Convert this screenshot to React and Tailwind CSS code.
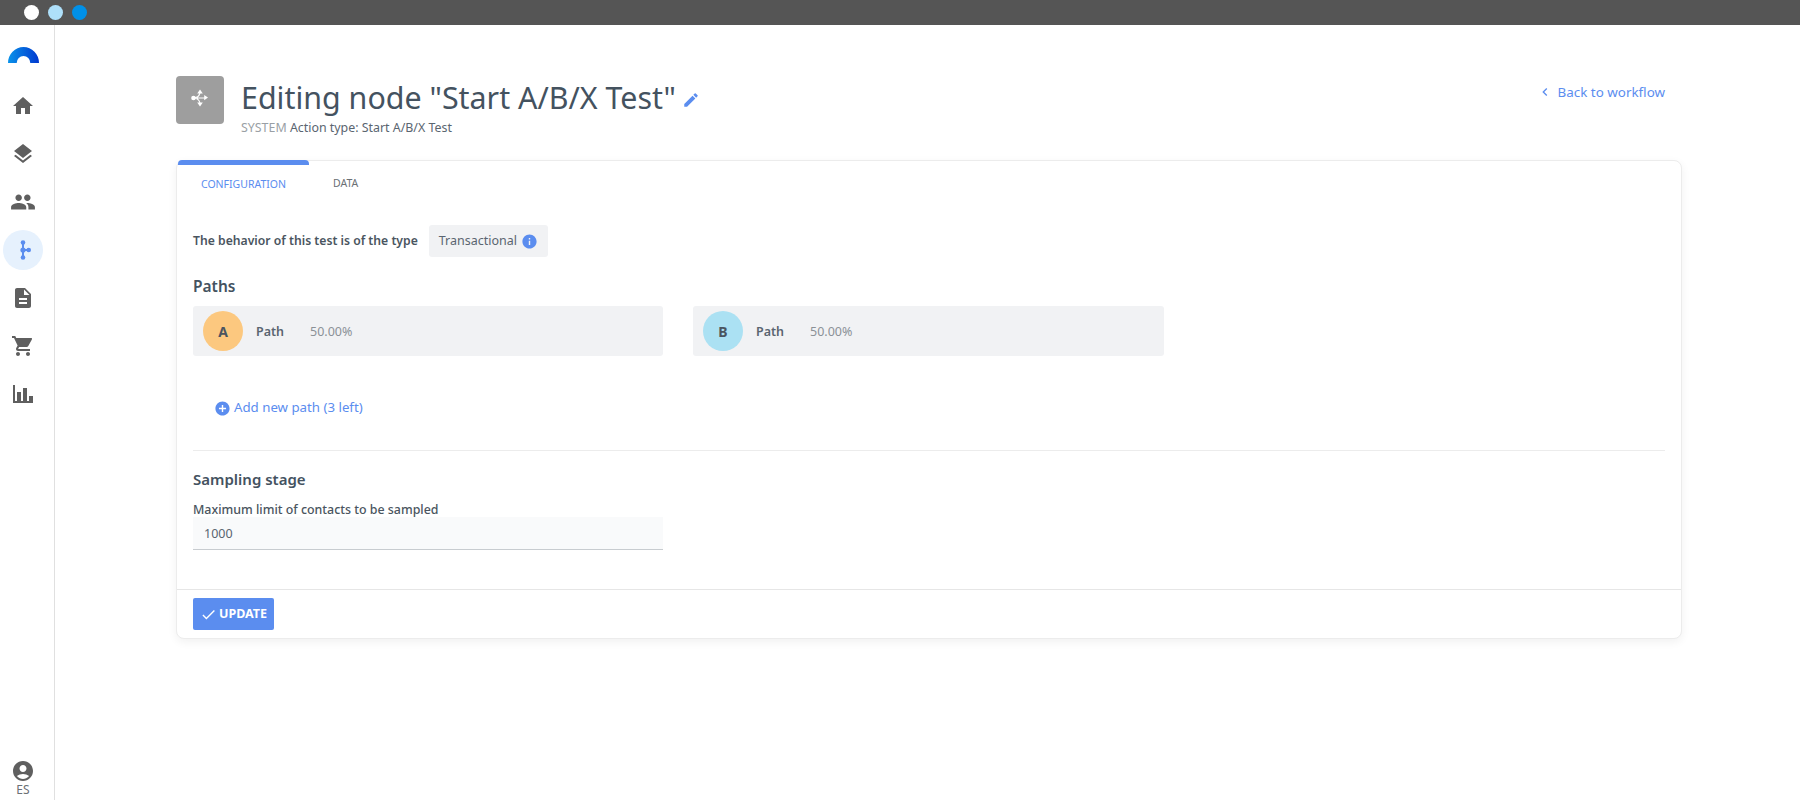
import React from "react";
import {
  MdHome,
  MdLayers,
  MdPeople,
  MdDescription,
  MdShoppingCart,
  MdAccountCircle,
  MdEdit,
  MdInfo,
  MdAddCircle,
  MdCheck,
  MdChevronLeft,
} from "react-icons/md";

const font = { fontFamily: '"Noto Sans", sans-serif' };

const Logo = () => (
  <svg width="31" height="17" viewBox="0 0 32 17" preserveAspectRatio="none" className="block">
    <defs>
      <linearGradient id="logoGrad" x1="0" x2="1" y1="0" y2="0">
        <stop offset="0" stopColor="#0a93ea" />
        <stop offset="1" stopColor="#0038cf" />
      </linearGradient>
    </defs>
    <path d="M0 17A16 16 0 0 1 32 17H23A7 7 0 0 0 9 17Z" fill="url(#logoGrad)" />
  </svg>
);

const BranchIcon = () => (
  <svg width="16" height="20" viewBox="0 0 16 20" fill="#5b8def">
    <circle cx="8" cy="2.5" r="2.3" />
    <circle cx="8" cy="10" r="2.6" />
    <circle cx="8" cy="17.5" r="2.3" />
    <circle cx="13.7" cy="10" r="2.3" />
    <rect x="7" y="2.5" width="2" height="15" />
    <rect x="8" y="9" width="6" height="2" />
  </svg>
);

const ChartIcon = () => (
  <svg width="24" height="24" viewBox="0 0 24 24" fill="#5f5f5f">
    <path d="M22,21H2V3H4V19H6V10H10V19H12V6H16V19H18V14H22V21Z" />
  </svg>
);

// four way arrow with a dot on the left, as in the reference
const MoveIcon = () => (
  <svg width="18" height="18" viewBox="0 0 18 18" fill="#fff" className="-mt-[4px]">
    <circle cx="2.5" cy="9" r="2.3" />
    <path d="M2.5 9C6 9 8 7.5 9 4M2.5 9C6 9 8 10.5 9 14M6 9H14" fill="none" stroke="#fff" strokeWidth="1.1" />
    <path d="M9 0.5L11.8 4.4H6.2Z" />
    <path d="M9 17.5L11.8 13.6H6.2Z" />
    <path d="M17 8.6L13.2 11.2V6Z" />
  </svg>
);

const navItems = [
  <MdHome size={24} color="#5f5f5f" />,
  <MdLayers size={24} color="#5f5f5f" />,
  <MdPeople size={26} color="#5f5f5f" />,
  <BranchIcon />,
  <MdDescription size={24} color="#5f5f5f" />,
  <MdShoppingCart size={24} color="#5f5f5f" />,
  <ChartIcon />,
];

const Sidebar = () => (
  <aside className="w-[55px] h-full shrink-0 border-r border-[#e0e0e0] bg-white flex flex-col items-center pr-[9px] pl-[1px] pt-[21px] pb-[3px]">
    <Logo />
    <nav className="mt-[23px] flex flex-col items-center">
      {navItems.map((icon, i) => (
        <div
          key={i}
          className={`w-10 h-10 mb-2 rounded-full flex items-center justify-center ${
            i === 3 ? "bg-[#e6f1fd]" : ""
          }`}
        >
          {icon}
        </div>
      ))}
    </nav>
    <div className="mt-auto flex flex-col items-center">
      <MdAccountCircle size={24} color="#5f5f5f" />
      <span className="text-[12px] leading-[14px] text-[#6b7075]">ES</span>
    </div>
  </aside>
);

const PathRow = ({ letter, color, width }) => (
  <div className={`${width} h-[50px] bg-[#f1f2f4] rounded-[3px] flex items-center pl-[10px]`}>
    <div
      className={`w-10 h-10 rounded-full flex items-center justify-center text-[14px] font-bold text-[#4a5560] pt-px ${color}`}
    >
      {letter}
    </div>
    <span className="ml-[13px] w-[54px] pt-[3px] text-[12.5px] font-semibold text-[#5a6570]">Path</span>
    <span className="pt-[3px] text-[12.5px] text-[#8b9197]">50.00%</span>
  </div>
);

export default function App() {
  return (
    <div className="w-[1800px] h-[800px] flex flex-col bg-white overflow-hidden" style={font}>
      <div className="h-[25px] shrink-0 bg-[#555555] flex items-center pl-[24px] gap-[9px]">
        <span className="w-[15px] h-[15px] rounded-full bg-white" />
        <span className="w-[15px] h-[15px] rounded-full bg-[#aee0fa]" />
        <span className="w-[15px] h-[15px] rounded-full bg-[#0090e8]" />
      </div>
      <div className="flex flex-1 min-h-0">
        <Sidebar />
        <main className="flex-1 pl-[121px] pr-[118px] pt-[51px]">
          <header className="flex items-start h-[84px]">
            <div className="w-[48px] h-[48px] rounded-[4px] bg-[#9e9e9e] flex items-center justify-center mr-[17px]">
              <MoveIcon />
            </div>
            <div className="flex-1 mt-[1px]">
              <div className="flex items-center">
                <h1 className="text-[30.4px] leading-[42px] text-[#44525f]">Editing node "Start A/B/X Test"</h1>
                <MdEdit size={18} color="#5b8def" className="ml-[6px] mt-1" />
              </div>
              <p className="text-[12.4px] leading-[16px] mt-[1px]">
                <span className="text-[#9a9fa5]">SYSTEM</span>{" "}
                <span className="text-[#5a6570]">Action type: Start A/B/X Test</span>
              </p>
            </div>
            <a className="flex items-center text-[13.4px] text-[#5b8def] mt-[6px] mr-[17px] gap-[5px]">
              <MdChevronLeft size={16} />
              Back to workflow
            </a>
          </header>

          <section className="h-[479px] rounded-[8px] border border-[#ececec] shadow-[0_3px_10px_rgba(0,0,0,0.06)] bg-white flex flex-col">
            <div className="flex h-[45px] text-[10.5px] leading-[45px]">
              <div className="w-[131px] ml-px text-center text-[#5b8def] border-t-[5px] border-[#5b8def] rounded-t-[4px] -mt-px leading-[38px]">
                CONFIGURATION
              </div>
              <div className="ml-6 text-[#6b7075]">DATA</div>
            </div>
            <div className="flex-1 pl-[16px] pr-[16px] pt-[19px]">
              <div className="flex items-center h-[32px]">
                <span className="text-[12.2px] font-semibold text-[#4a5560]">The behavior of this test is of the type</span>
                <span className="ml-[11px] h-[32px] px-[10px] bg-[#f1f2f4] rounded-[3px] flex items-center gap-[4px] text-[12.5px] text-[#5a6570]">
                  Transactional <MdInfo size={17} color="#5b8def" />
                </span>
              </div>
              <h2 className="mt-[17px] text-[15.5px] leading-[24px] font-semibold text-[#44525f]">Paths</h2>
              <div className="flex gap-[30px] mt-[8px]">
                <PathRow letter="A" color="bg-[#fcc87f]" width="w-[470px]" />
                <PathRow letter="B" color="bg-[#abe1f3]" width="w-[471px]" />
              </div>
              <div className="flex items-center mt-[42px] ml-[21px] h-[20px] gap-[3px] text-[13.25px] text-[#5b8def]">
                <MdAddCircle size={17} />
                Add new path (3 left)
              </div>
              <hr className="mt-[32px] border-[#ececec]" />
              <h2 className="mt-[16px] text-[15px] leading-[24px] font-semibold text-[#44525f]">Sampling stage</h2>
              <label className="block mt-[11px] text-[12.4px] leading-[16px] font-medium text-[#4a5560]">
                Maximum limit of contacts to be sampled
              </label>
              <div className="w-[470px] h-[33px] -mt-px pt-[2px] bg-[#f9fafb] border-b border-[#c8ccd0] flex items-center pl-[11px] text-[12.5px] text-[#5a6570]">
                1000
              </div>
            </div>
            <div className="h-[49px] border-t border-[#e6e6e6] px-[16px] pt-[8px]">
              <button className="h-[32px] w-[81px] bg-[#5b8def] rounded-[2px] flex items-center justify-center gap-[2px] text-white text-[12.5px] font-bold">
                <MdCheck size={17} />
                UPDATE
              </button>
            </div>
          </section>
        </main>
      </div>
    </div>
  );
}
